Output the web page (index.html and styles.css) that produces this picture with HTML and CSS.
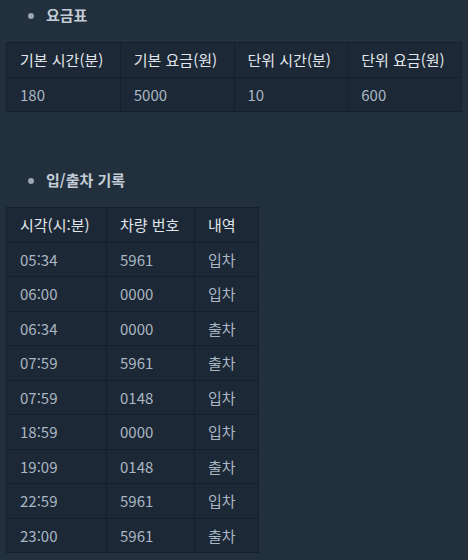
FILE: index.html
```html
<!DOCTYPE html>
<html lang="ko">
<head>
<meta charset="utf-8">
<link rel="stylesheet" href="styles.css">
</head>
<body>
<section class="block">
  <ul class="heading"><li>요금표</li></ul>
  <table class="grid full">
    <thead>
      <tr><th>기본 시간(분)</th><th>기본 요금(원)</th><th>단위 시간(분)</th><th>단위 요금(원)</th></tr>
    </thead>
    <tbody>
      <tr><td>180</td><td>5000</td><td>10</td><td>600</td></tr>
    </tbody>
  </table>
</section>
<section class="block second">
  <ul class="heading"><li>입/출차 기록</li></ul>
  <table class="grid log">
    <colgroup><col class="c-time"><col class="c-car"><col class="c-kind"></colgroup>
    <thead>
      <tr><th>시각(시:분)</th><th>차량 번호</th><th>내역</th></tr>
    </thead>
    <tbody>
      <tr><td>05:34</td><td>5961</td><td>입차</td></tr>
      <tr><td>06:00</td><td>0000</td><td>입차</td></tr>
      <tr><td>06:34</td><td>0000</td><td>출차</td></tr>
      <tr><td>07:59</td><td>5961</td><td>출차</td></tr>
      <tr><td>07:59</td><td>0148</td><td>입차</td></tr>
      <tr><td>18:59</td><td>0000</td><td>입차</td></tr>
      <tr><td>19:09</td><td>0148</td><td>출차</td></tr>
      <tr><td>22:59</td><td>5961</td><td>입차</td></tr>
      <tr><td>23:00</td><td>5961</td><td>출차</td></tr>
    </tbody>
  </table>
</section>
</body>
</html>
```
FILE: styles.css
```css
html, body {
  margin: 0;
  background: #22303d;
}
body {
  padding: 0 6px;
  font-family: "Noto Sans CJK KR", "Noto Sans", sans-serif;
  font-size: 15px;
  color: #a9b6c3;
}
.heading {
  margin: 0;
  padding: 5px 0 0 40px;
  list-style: disc;
  font-weight: bold;
  color: #c3ccd6;
  line-height: 20px;
  height: 42px;
  box-sizing: border-box;
}
.heading li::marker {
  color: #9aa6b2;
}
.second {
  margin-top: 54px;
}
.second .heading {
  padding-top: 4px;
  height: 41px;
}
.grid {
  border-collapse: collapse;
  background: #1c2835;
  border: 1px solid #16202c;
}
.grid.full {
  width: 100%;
  table-layout: fixed;
}
.grid.log {
  table-layout: fixed;
  width: 252px;
}
.c-time { width: 100px; }
.c-car { width: 88px; }
.c-kind { width: 64px; }
.grid th, .grid td {
  border: 1px solid #16202c;
  text-align: left;
  padding: 6px 12px 6px 13px;
  line-height: 21.5px;
  white-space: nowrap;
}
.grid th {
  font-weight: normal;
  color: #e1e6ec;
}
```
